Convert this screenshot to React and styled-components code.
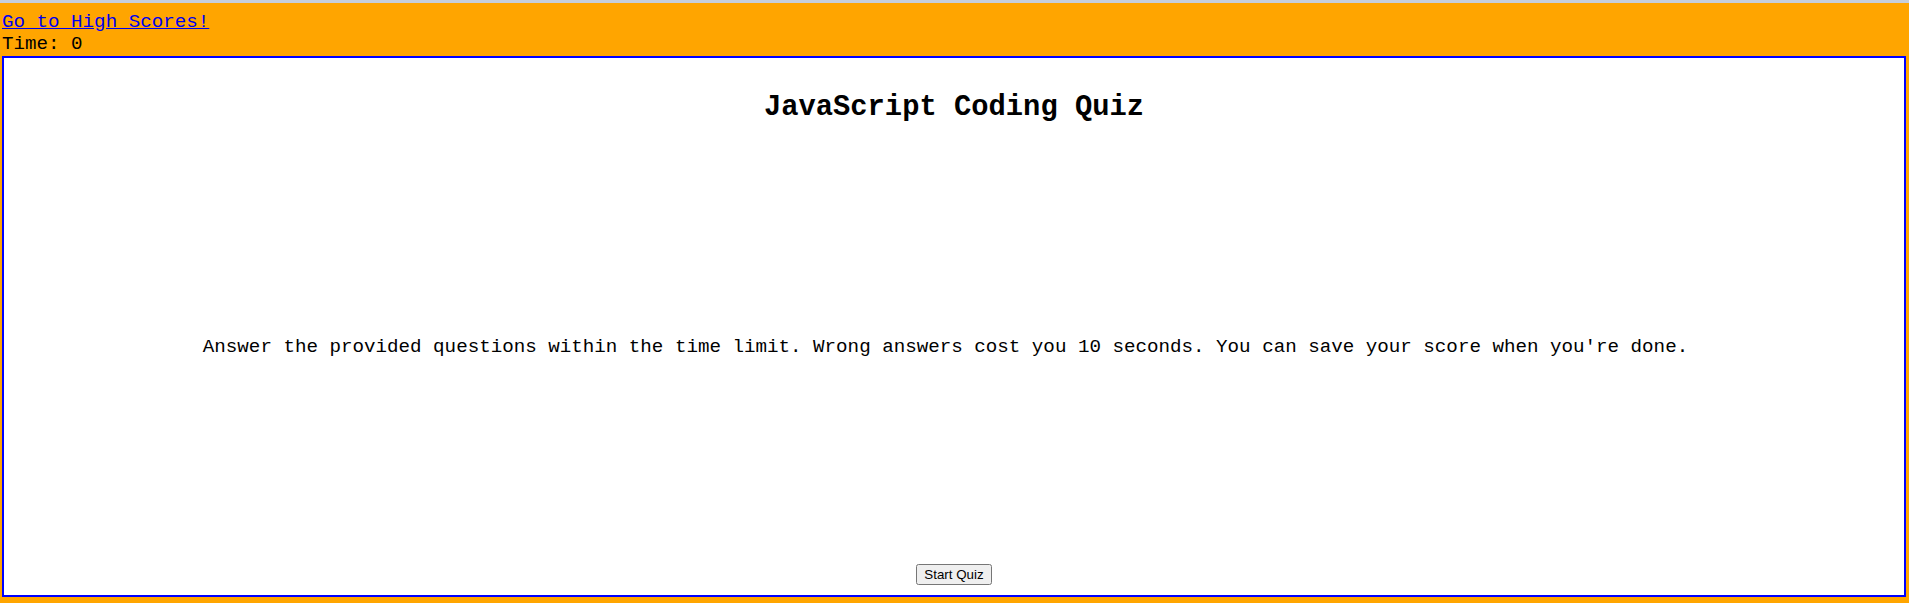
import styled, { createGlobalStyle } from "styled-components";

const GlobalStyle = createGlobalStyle`
  html, body {
    margin: 0;
    padding: 0;
    height: 100%;
  }
  body {
    font-family: "Liberation Mono", "Courier New", monospace;
    font-size: 19.2px;
    background: orange;
  }
  #root {
    height: 100%;
  }
`;

const Page = styled.div`
  height: 100vh;
  display: flex;
  flex-direction: column;
  box-sizing: border-box;
  border-top: 3px solid #c6cfdc;
  background: #ffa500;
  padding: 0 3px 6px 2px;
`;

const Header = styled.header`
  padding-top: 8px;
  margin-bottom: 1px;
`;

const ScoresLink = styled.a`
  display: block;
  color: #0000ee;
  text-decoration: underline;
`;

const Timer = styled.div`
  color: #000;
`;

const Card = styled.main`
  flex: 1;
  display: flex;
  flex-direction: column;
  align-items: center;
  background: #fff;
  border: 2px solid #0000ff;
`;

const Title = styled.h2`
  font-size: 28.8px;
  font-weight: bold;
  margin: 33px 0 0;
`;

const Middle = styled.section`
  flex: 1;
  display: flex;
  align-items: center;
  justify-content: center;
  padding-top: 6px;
  padding-right: 17px;
`;

const Intro = styled.p`
  margin: 0;
  color: #000;
`;

const Footer = styled.div`
  padding-bottom: 10px;
`;

const StartButton = styled.button`
  font-family: "Liberation Sans", Arial, sans-serif;
  font-size: 13.33px;
`;

export default function App() {
  return (
    <>
      <GlobalStyle />
      <Page>
        <Header>
          <ScoresLink href="#">Go to High Scores!</ScoresLink>
          <Timer>Time: 0</Timer>
        </Header>
        <Card>
          <Title>JavaScript Coding Quiz</Title>
          <Middle>
            <Intro>
              Answer the provided questions within the time limit. Wrong answers
              cost you 10 seconds. You can save your score when you're done.
            </Intro>
          </Middle>
          <Footer>
            <StartButton>Start Quiz</StartButton>
          </Footer>
        </Card>
      </Page>
    </>
  );
}
